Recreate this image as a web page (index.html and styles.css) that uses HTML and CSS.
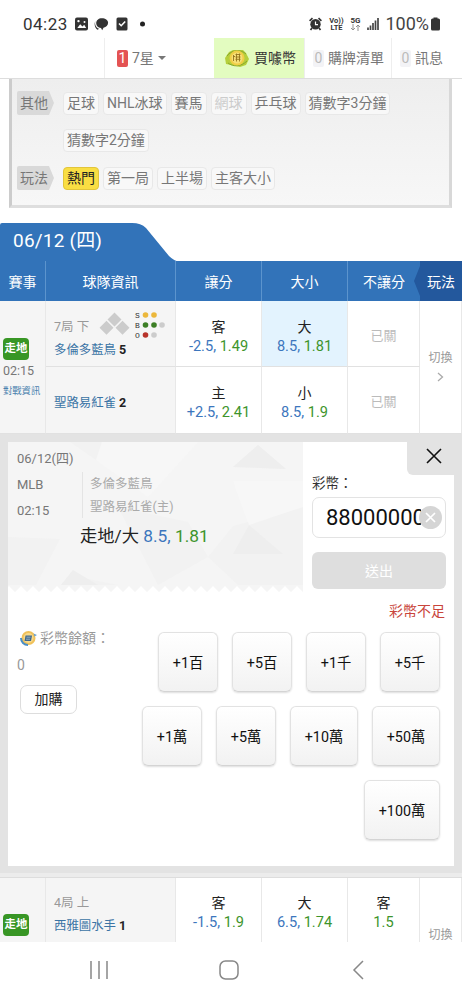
FILE: index.html
```html
<!DOCTYPE html>
<html lang="zh-Hant">
<head>
<meta charset="utf-8">
<meta name="viewport" content="width=device-width">
<title>06/12 (四)</title>
<link rel="stylesheet" href="styles.css">
</head>
<body>
<div class="statusbar">
  <span class="clock">04:23</span>
  <svg class="st-left" width="76" height="16" viewBox="0 0 76 16">
    <rect x="0" y="1.5" width="13" height="13" rx="2" fill="#333"/><path d="M2.3 12 5.2 8.2 7.5 10.6 9.2 8.8 11.2 12Z" fill="#fff"/><rect x="2.3" y="4" width="2.3" height="2.3" rx="1" fill="#fff"/><rect x="8.5" y="5" width="2" height="2" rx="1" fill="#fff"/>
    <path d="M26.800 2.200c3.600 0 6.300 1.800 6.300 4.600 0 2.600-2 4.300-4.600 4.900l-1.300 2.600-1.200-2.300C23 11.700 21.200 9.600 21.200 7.200c0-3 2.400-5 5.600-5Z" fill="#333"/><path d="M20.400 5c-1 3 .3 6.500 3.600 7.800l-1.200 1C20 12.500 18.800 8 20.400 5Z" fill="#333"/>
    <rect x="41.500" y="1.500" width="11" height="13" rx="1.500" fill="#333"/><path d="m44 7.500 2.200 2.200 4-4.200" fill="none" stroke="#fff" stroke-width="1.600"/>
    <circle cx="67.500" cy="8" r="2.500" fill="#222"/>
  </svg>
  <div class="st-right">
    <svg width="13" height="14" viewBox="0 0 13 14"><circle cx="6.500" cy="7.300" r="5.200" fill="#333"/><path d="M.6 3.800 3.500 1.200M12.400 3.800 9.500 1.200M3 11 1.500 13M10 11 11.500 13" stroke="#333" stroke-width="1.700"/><path d="M6.500 4.500v3.200h2.500" fill="none" stroke="#fff" stroke-width="1.200"/></svg>
    <span class="volte"><b>Vo))</b><b>LTE</b></span>
    <span class="fiveg"><b>5G</b><svg width="11" height="7" viewBox="0 0 11 7"><path d="M3 0v6M1 4l2 2 2-2M8 7V1M6 3l2-2 2 2" fill="none" stroke="#888" stroke-width=".9"/></svg></span>
    <svg class="signal" width="12" height="12" viewBox="0 0 12 12"><path d="M1 12V9.500M3.500 12V7.500M6 12V5M8.500 12V2.500M11 12V0" stroke="#444" stroke-width="1.700"/></svg>
    <span class="pct">100%</span>
    <svg width="9" height="14" viewBox="0 0 9 14"><path d="M2.500 1.500V.5h4v1h1A1.500 1.500 0 0 1 9 3v9a1.500 1.500 0 0 1-1.500 1.500h-6A1.500 1.500 0 0 1 0 12V3a1.500 1.500 0 0 1 1.500-1.500Z" fill="#333"/></svg>
  </div>
</div>

<nav class="topnav">
  <div class="n-blank"></div>
  <div class="n-star"><b>1</b><span>7星</span><i></i></div>
  <div class="n-buy">
    <svg width="26" height="20" viewBox="0 0 26 20"><path d="M1 10 5 4l4-2 10 0 3 3 3 6-3 6-6 2-9-2-5-1Z" fill="#b5cf3c"/><path d="M3 8c4-6 14-7 19-2M4 15c5 4 13 4 19-2" fill="none" stroke="#8aa62c"/><circle cx="13" cy="10" r="7.500" fill="#f0ce45"/><circle cx="13" cy="10" r="5.500" fill="#f6df78"/><path d="M9.500 7v6M11.500 6.500h5M11.500 9h5M11.500 11.300h5M12.500 5.500v8M15.500 5.500v8M9 8.500h2" stroke="#93741b" stroke-width=".9"/></svg>
    <span>買噱幣</span>
  </div>
  <div class="n-list"><b>0</b><span>購牌清單</span></div>
  <div class="n-msg"><b>0</b><span>訊息</span></div>
</nav>

<section class="filters">
  <div class="frow"><span class="flabel">其他</span><div class="tags"><span>足球</span><span>NHL冰球</span><span>賽馬</span><span class="off">網球</span><span>乒乓球</span><span>猜數字3分鐘</span><span>猜數字2分鐘</span></div></div>
  <div class="frow"><span class="flabel">玩法</span><div class="tags"><span class="on">熱門</span><span>第一局</span><span>上半場</span><span>主客大小</span></div></div>
</section>

<div class="daytab">
  <svg width="180" height="39" viewBox="0 0 180 39"><path d="M0 39V2Q0 0 2 0H132Q141 0 146 5L169 33Q174 38 180 39Z" fill="#3273b9"/></svg>
  <span>06/12 (四)</span>
</div>

<div class="grid head">
  <div>賽事</div><div>球隊資訊</div><div>讓分</div><div>大小</div><div>不讓分</div>
  <div class="play"><svg width="6" height="40" viewBox="0 0 6 40"><path d="M6 5 0 20 6 35Z" fill="#23589d"/></svg>玩法</div>
</div>

<div class="grid game">
  <div class="event"><span class="live">走地</span><span class="time">02:15</span><span class="vs">對戰資訊</span></div>
  <div class="team t1">
    <div class="inning"><span>7局 下</span>
      <svg width="66" height="30" viewBox="0 0 66 30"><g fill="#ccc"><path d="m15.500 1.500 7 7-7 7-7-7ZM7.500 9.700l7 7-7 7-7-7ZM23.500 9.700l7 7-7 7-7-7Z"/></g>
        <g class="sbo"><text x="36" y="6.500">S</text><text x="36" y="16.500">B</text><text x="36" y="26.500">O</text></g>
        <g fill="#ecb83c"><circle cx="46.500" cy="4" r="2.800"/><circle cx="55" cy="4" r="2.800"/></g><g fill="#3d7f25"><circle cx="46.500" cy="14" r="2.800"/><circle cx="55" cy="14" r="2.800"/></g><circle cx="46.500" cy="24" r="2.800" fill="#b8342b"/><g fill="#ccc"><circle cx="63" cy="14" r="2.800"/><circle cx="55" cy="24" r="2.800"/></g></svg>
    </div>
    <div class="name">多倫多藍鳥 <b>5</b></div>
  </div>
  <div class="odd"><span>客</span><p><i>-2.5,</i> 1.49</p></div>
  <div class="odd sel"><span>大</span><p><i>8.5,</i> 1.81</p></div>
  <div class="closed">已關</div>
  <div class="switch">切換<svg width="7" height="10" viewBox="0 0 7 10"><path d="m1 1 4.500 4L1 9" fill="none" stroke="#aaa" stroke-width="1.300"/></svg></div>
  <div class="team t2"><div class="name">聖路易紅雀 <b>2</b></div></div>
  <div class="odd"><span>主</span><p><i>+2.5,</i> 2.41</p></div>
  <div class="odd"><span>小</span><p><i>8.5,</i> 1.9</p></div>
  <div class="closed">已關</div>
</div>

<section class="betwrap">
  <div class="bet">
    <div class="bet-top">
      <div class="ticket">
        <svg class="facets" width="295" height="150" viewBox="0 0 295 150"><path d="M0 0H295V150l-6-6-6 6-6-6-6 6-6-6-6 6-6-6-6 6-6-6-6 6-6-6-6 6-6-6-6 6-6-6-6 6-6-6-6 6-6-6-6 6-6-6-6 6-6-6-6 6-6-6-6 6-6-6-6 6-6-6-6 6-6-6-6 6-6-6-6 6-6-6-6 6-6-6-6 6-6-6-6 6-6-6-6 6-6-6-6 6-6-6-6 6-6-6-6 6-6-6-6 6-7-6Z" fill="#f5f5f5"/><path d="M0 95 52 97 28 143H0ZM65 128 53 143H110L80 137ZM200 115 225 84 295 65V143H230ZM225 25 250 3 278 27ZM225 105 241 83 275 116ZM62 0H94L88 18ZM110 65 180 80 200 115 150 143Z" fill="#f2f2f2"/><path d="M94 0H190L140 55 88 18ZM225 39H295V65L241 83Z" fill="#f7f7f7"/><path d="M225 25 250 3 278 27ZM225 112 241 83 275 112ZM65 128 53 143H90Z" fill="#eee"/></svg>
        <div class="tcontent">
          <div class="tdate">06/12(四)</div>
          <div class="tmid"><div class="tleft"><span>MLB</span><span>02:15</span></div><div class="tteams"><span>多倫多藍鳥</span><span>聖路易紅雀(主)</span></div></div>
          <div class="tpick">走地/大 <i>8.5,</i> <em>1.81</em></div>
        </div>
      </div>
      <div class="amount">
        <label>彩幣：</label>
        <div class="field"><span>88000000</span><svg width="23" height="23" viewBox="0 0 23 23"><circle cx="11.500" cy="11.500" r="11.500" fill="#d5d5d5"/><path d="m7 7 9 9M16 7l-9 9" stroke="#fff" stroke-width="1.700"/></svg></div>
        <div class="send">送出</div>
        <div class="err">彩幣不足</div>
      </div>
    </div>
    <div class="bet-bottom">
      <div class="balance">
        <div class="bal"><svg width="18" height="16" viewBox="0 0 18 16"><circle cx="8.500" cy="8" r="7" fill="#f0c15a"/><circle cx="8.500" cy="8" r="5" fill="#f7d98c"/><path d="M1 8c0 4 3 7 7 7" fill="none" stroke="#4c8fc4" stroke-width="2"/><path d="M5.500 5.500h6.500l-1 5.500H4.500Z" fill="#41698c"/><path d="M6.500 7.200h4M6 9.200h4" stroke="#a9bfc9" stroke-width=".8"/><path d="m13.500 3.500 3.500 1.500-2.500 1.500Z" fill="#6ba2cc"/></svg><span>彩幣餘額：</span></div>
        <div class="zero">0</div>
        <div class="topup">加購</div>
      </div>
      <div class="chips">
        <div><span>+1百</span><span>+5百</span><span>+1千</span><span>+5千</span></div>
        <div><span>+1萬</span><span>+5萬</span><span class="w2">+10萬</span><span class="w2">+50萬</span></div>
        <div><span class="w3">+100萬</span></div>
      </div>
    </div>
  </div>
  <div class="close"><svg width="16" height="16" viewBox="0 0 16 16"><path d="m1 1 14 14M15 1 1 15" stroke="#111" stroke-width="1.600"/></svg></div>
</section>

<div class="grid game next">
  <div class="event"><span class="live">走地</span></div>
  <div class="team t1"><div class="inning"><span>4局 上</span></div><div class="name">西雅圖水手 <b>1</b></div></div>
  <div class="odd"><span>客</span><p><i>-1.5,</i> 1.9</p></div>
  <div class="odd"><span>大</span><p><i>6.5,</i> 1.74</p></div>
  <div class="odd"><span>客</span><p>1.5</p></div>
  <div class="switch">切換</div>
</div>

<div class="sysnav">
  <svg width="20" height="20" viewBox="0 0 20 20"><path d="M2 1v18M10 1v18M18 1v18" stroke="#888" stroke-width="1.500"/></svg>
  <svg width="20" height="20" viewBox="0 0 20 20"><rect x="1" y="1" width="18" height="18" rx="5.500" fill="none" stroke="#888" stroke-width="1.500"/></svg>
  <svg width="20" height="20" viewBox="0 0 20 20"><path d="M14 1 5 10l9 9" fill="none" stroke="#888" stroke-width="1.500"/></svg>
</div>
</body>
</html>
```

FILE: styles.css
```css
* { box-sizing: border-box; }
body { margin: 0; width: 462px; height: 1000px; overflow: hidden; background: #fff; color: #777; font: 14px/20px Roboto, "Noto Sans CJK TC", sans-serif; }
i, em { font-style: normal; }
p { margin: 0; }
svg { display: block; flex: none; }
span { white-space: nowrap; }

.statusbar { height: 38px; padding: 10px 22px 0 23px; display: flex; align-items: center; color: #333; }
.clock { font-size: 17px; width: 52px; letter-spacing: .5px; }
.st-right { margin-left: auto; display: flex; align-items: center; }
.volte, .fiveg { display: flex; flex-direction: column; align-items: center; font-size: 7.5px; line-height: 7px; height: 14px; }
.volte { margin-left: 7px; width: 14px; }
.fiveg { margin-left: 6px; width: 12px; }
.fiveg b { font-size: 8px; }
.signal { margin-left: 6px; }
.pct { font-size: 18px; margin: 0 2px 0 6px; color: #444; }

.topnav { height: 41px; display: grid; grid-template-columns: 104px 110px 90px 87px 71px; border-bottom: 1px solid #ddd; }
.topnav > div { display: flex; align-items: center; border-left: 1px solid #eee; }
.topnav > .n-blank { border: 0; }
.topnav b { font-weight: 400; width: 11px; height: 17px; line-height: 17px; text-align: center; border-radius: 2px; background: #f3f3f6; color: #bbb; }
.n-star { padding-left: 12px; }
.topnav .n-star b { background: #e45353; color: #fff; margin-right: 4px; }
.n-star i { border: 4px solid transparent; border-top-color: #777; border-bottom: 0; margin-left: 4px; }
.topnav .n-buy { background: #e3fcc0; border: 0; padding-left: 10px; color: #333; }
.n-buy span { margin-left: 4px; }
.n-list, .n-msg { padding-left: 8px; gap: 4px; }
.n-msg { padding-left: 8px; }
.n-msg span { margin-left: 0; }

.filters { margin: 0 10px 0 9px; width: 443px; height: 129px; border: 3px solid #ccc; border-right-color: #d8d8d8; border-bottom-color: #dedede; border-top: 0; background: linear-gradient(#eee, #f7f7f7); padding: 12px 0 0 5px; }
.frow { display: flex; margin-bottom: 14px; }
.flabel { width: 37px; height: 24px; line-height: 24px; padding-left: 3px; background: #d9d9d9; clip-path: polygon(0 0, 32px 0, 100% 50%, 32px 100%, 0 100%); margin-right: 9px; border-radius: 2px; }
.tags { display: flex; flex-wrap: wrap; width: 350px; gap: 14px 4px; padding-top: 1px; }
.tags span { height: 23px; line-height: 21px; padding: 0 3px; border: 1px solid #e8e8e8; border-radius: 4px; background: #f8f8f8; }
.tags .off { color: #ccc; }
.tags .on { background: #f9de43; border-color: #e2c53b; color: #222; }

.daytab { height: 39px; margin-top: 15px; position: relative; color: #fff; font-size: 19px; }
.daytab svg { position: absolute; left: 0; top: 0; }
.daytab span { position: relative; display: block; padding: 8px 0 0 13px; letter-spacing: .2px; }

.grid { display: grid; grid-template-columns: 46px 130px 86px 86px 72px 42px; }
.head { height: 40px; margin-top: -1px; background: #3273b9; color: #fff; position: relative; }
.head > div { display: flex; align-items: center; justify-content: center; padding-top: 2px; border-right: 1px solid #5c94cd; }
.head > div:nth-child(5) { border: 0; }
.head > .play { background: #23589d; border: 0; position: relative; }
.play svg { position: absolute; left: -6px; top: 0; }

.game { grid-template-rows: 66px 67px; height: 133px; }
.game > div { border-right: 1px solid #e8e8e8; border-bottom: 1px solid #e1e1e1; }
.event { grid-row: 1 / 3; background: #f5f5f5; padding: 37px 0 0 3px; display: flex; flex-direction: column; align-items: flex-start; }
.live { width: 26px; height: 22px; line-height: 21px; border-radius: 4px; background: #389625; color: #fff; font-weight: 700; font-size: 11.5px; text-align: center; }
.time { font-size: 12.500px; line-height: 20px; padding-top: 1px; }
.vs { font-size: 9.300px; color: #4a81ae; }
.team { background: #f5f5f5; padding-left: 8px; }
.inning { display: flex; height: 39px; padding-top: 10px; color: #999; font-size: 13px; }
.inning span { width: 45px; padding-top: 6px; font-size: 12.500px; }
.sbo text { font: 8px "Liberation Mono", monospace; fill: #333; }
.name { font-size: 12.400px; color: #3b74a5; }
.name b { color: #222; font-size: 12.500px; }
.t2 { padding-top: 26px; }
.odd { text-align: center; padding-top: 17px; color: #3d942b; font-size: 14.600px; }
.odd span { display: block; line-height: 19px; color: #222; font-size: 14px; }
.odd p { line-height: 18px; }
.odd i { color: #3c76bd; }
.sel { background: #e3f3fe; }
.closed { text-align: center; padding-top: 25px; color: #bbb; font-size: 13px; }
.switch { grid-column: 6; grid-row: 1 / 3; font-size: 12px; display: flex; flex-direction: column; align-items: center; padding-top: 47px; color: #999; }
.switch svg { margin-top: 4px; }

.betwrap { height: 443px; background: #e3e3e3; padding: 8px; position: relative; border-bottom: 4px solid #ececec; }
.bet { width: 446px; height: 424px; background: #fff; }
.close { position: absolute; right: 0; top: 8px; width: 55px; height: 33px; background: #e3e3e3; border-radius: 0 0 0 6px; padding: 6px 0 0 19px; }
.bet-top { display: flex; height: 182px; }
.ticket { width: 295px; position: relative; }
.facets { position: absolute; left: 0; top: 0; }
.tcontent { position: relative; padding: 7px 0 0 9px; font-size: 13px; }
.tmid { display: flex; margin-top: 3px; }
.tleft { width: 65px; display: flex; flex-direction: column; line-height: 26px; font-size: 13px; }
.tteams { display: flex; flex-direction: column; border-left: 1px solid #e4e4e4; line-height: 23px; padding-left: 7px; color: #aaa; font-size: 12.500px; height: 46px; }
.tpick { font-size: 17.300px; line-height: 24px; padding: 0 0 0 63px; color: #222; }
.tpick i { color: #3c76bd; }
.tpick em { color: #3d942b; }
.amount { padding: 31px 0 0 9px; width: 143px; }
.amount label { display: block; color: #333; font-size: 13.500px; }
.field { width: 134px; height: 41px; margin-top: 4px; border: 1px solid #e3e3e3; border-radius: 7px; display: flex; align-items: center; padding-left: 13px; color: #111; font-size: 22px; }
.field span { width: 95px; overflow: hidden; }
.field svg { margin-left: -2px; }
.send { width: 134px; height: 37px; line-height: 38px; margin-top: 14px; border-radius: 6px; background: #dedede; color: #fff; text-align: center; }
.err { margin-top: 12px; text-align: right; width: 133px; color: #c9453b; }
.bet-bottom { display: flex; justify-content: space-between; padding-right: 14px; }
.balance { padding: 4px 0 0 9px; color: #999; }
.bal { display: flex; align-items: center; padding-left: 3px; gap: 2px; }
.zero { margin-top: 7px; }
.topup { margin: 10px 0 0 3px; width: 57px; height: 29px; line-height: 27px; border: 1px solid #ddd; border-radius: 7px; text-align: center; color: #222; }
.chips { display: flex; flex-direction: column; gap: 14px; padding-top: 8px; }
.chips > div { display: flex; justify-content: flex-end; gap: 14px; }
.chips span { width: 60px; height: 60px; line-height: 60px; text-align: center; border: 1px solid #e2e2e2; border-bottom-color: #d4d4d4; border-radius: 6px; background: linear-gradient(#fff, #f2f2f2); box-shadow: 0 1px 2px #ddd; color: #111; font-size: 14.300px; }
.chips .w2 { width: 68px; }
.chips .w3 { width: 76px; }

.next { height: 65px; overflow: hidden; border-top: 1px solid #ddd; }
.next .event { padding-top: 36px; }
.next .inning { height: 38px; padding-top: 9px; }
.next .odd { padding-top: 16px; }
.sysnav { height: 58px; display: flex; justify-content: space-between; padding: 18px 93px 0 89px; }
```
